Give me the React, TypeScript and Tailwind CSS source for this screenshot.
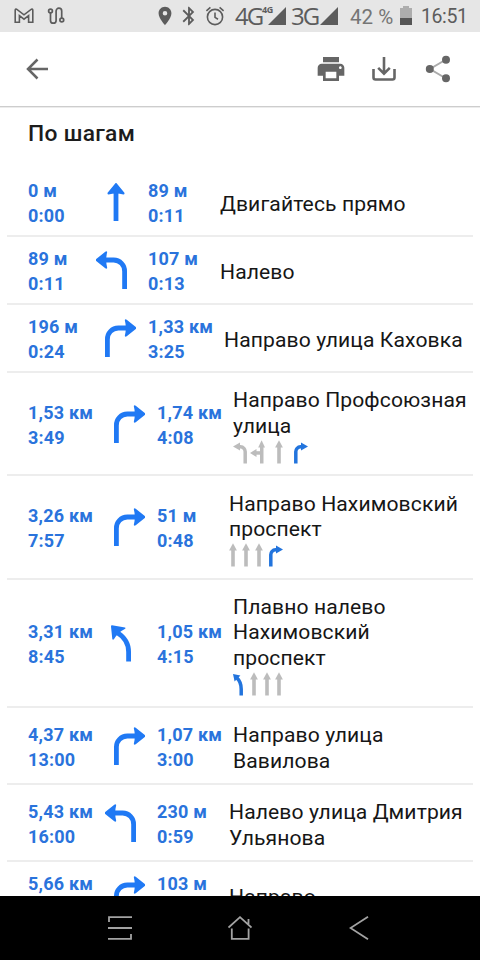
import type { ReactNode } from "react";
import { MdBluetooth, MdLocationOn, MdPrint } from "react-icons/md";

type Turn = "straight" | "left" | "right" | "slight";
type Lane = Turn | "leftStraight";

interface Step {
  from: [string, string];
  turn: Turn;
  leg: [string, string];
  text: ReactNode;
  height: string;
  // column widths grow with the "км" values
  fromCol: string;
  legCol: string;
  lanes?: { type: Lane; gap: string; active?: boolean }[];
}

const STEPS: Step[] = [
  {
    from: ["0 м", "0:00"],
    turn: "straight",
    leg: ["89 м", "0:11"],
    text: "Двигайтесь прямо",
    height: "h-[69px]",
    fromCol: "w-[68px]",
    legCol: "w-[72px]",
  },
  {
    from: ["89 м", "0:11"],
    turn: "left",
    leg: ["107 м", "0:13"],
    text: "Налево",
    height: "h-[68px]",
    fromCol: "w-[68px]",
    legCol: "w-[72px]",
  },
  {
    from: ["196 м", "0:24"],
    turn: "right",
    leg: ["1,33 км", "3:25"],
    text: "Направо улица Каховка",
    height: "h-[68px]",
    fromCol: "w-[68px]",
    legCol: "w-[76px]",
  },
  {
    from: ["1,53 км", "3:49"],
    turn: "right",
    leg: ["1,74 км", "4:08"],
    text: <>Направо Профсоюзная<br />улица</>,
    height: "h-[103px]",
    fromCol: "w-[77px]",
    legCol: "w-[76px]",
    lanes: [
      { type: "left", gap: "ml-0" },
      { type: "leftStraight", gap: "ml-[3px]" },
      { type: "straight", gap: "ml-[10px]" },
      { type: "right", gap: "ml-[11px]", active: true },
    ],
  },
  {
    from: ["3,26 км", "7:57"],
    turn: "right",
    leg: ["51 м", "0:48"],
    text: <>Направо Нахимовский<br />проспект</>,
    height: "h-[104px]",
    fromCol: "w-[77px]",
    legCol: "w-[72px]",
    lanes: [
      { type: "straight", gap: "ml-0" },
      { type: "straight", gap: "ml-[5px]" },
      { type: "straight", gap: "ml-[5px]" },
      { type: "right", gap: "ml-[6px]", active: true },
    ],
  },
  {
    from: ["3,31 км", "8:45"],
    turn: "slight",
    leg: ["1,05 км", "4:15"],
    text: <>Плавно налево<br />Нахимовский<br />проспект</>,
    height: "h-[128px]",
    fromCol: "w-[77px]",
    legCol: "w-[76px]",
    lanes: [
      { type: "slight", gap: "ml-0", active: true },
      { type: "straight", gap: "ml-[7px]" },
      { type: "straight", gap: "ml-[5px]" },
      { type: "straight", gap: "ml-[4px]" },
    ],
  },
  {
    from: ["4,37 км", "13:00"],
    turn: "right",
    leg: ["1,07 км", "3:00"],
    text: <>Направо улица<br />Вавилова</>,
    height: "h-[77px]",
    fromCol: "w-[77px]",
    legCol: "w-[76px]",
  },
  {
    from: ["5,43 км", "16:00"],
    turn: "left",
    leg: ["230 м", "0:59"],
    text: <>Налево улица Дмитрия<br />Ульянова</>,
    height: "h-[77px]",
    fromCol: "w-[77px]",
    legCol: "w-[72px]",
  },
  {
    from: ["5,66 км", "16:59"],
    turn: "right",
    leg: ["103 м", "0:22"],
    text: "Направо",
    height: "h-[68px]",
    fromCol: "w-[77px]",
    legCol: "w-[72px]",
  },
];

function RightArrow() {
  return (
    <>
      <path d="M11.4 38V20.5A11 11 0 0 1 22.4 9H32" fill="none" stroke="currentColor" strokeWidth="4.8" />
      <path d="M28.8 1Q29.4-.2 30.7.8L39.8 8Q40.6 9 39.8 10L30.7 17.2Q29.4 18.2 28.8 17Q30.8 9 28.8 1Z" />
    </>
  );
}

function TurnIcon({ turn }: { turn: Turn }) {
  return (
    <svg viewBox="0 0 40 40" className="block size-10 shrink-0 text-[#2079f4]" fill="currentColor">
      {turn === "straight" && (
        <>
          <path d="M17.6 8h4.8v30h-4.8z" />
          <path d="M19.2.4Q20 -.6 20.8.4L28.4 9.8Q28.9 11.4 27.4 11.4Q20 9.8 12.6 11.4Q11.1 11.4 11.6 9.8Z" />
        </>
      )}
      {turn === "right" && <RightArrow />}
      {turn === "left" && (
        <g transform="matrix(-1 0 0 1 40 0)">
          <RightArrow />
        </g>
      )}
      {turn === "slight" && (
        <>
          <path d="M23.6 37.5V28Q23.6 15.5 12 8.5" fill="none" stroke="currentColor" strokeWidth="4.8" />
          <path d="M6 2.4Q6 1.2 7 1.3L20 3.4Q21 3.8 20.2 4.8Q13 8.4 8.9 15.2Q7.8 16.2 7.3 15Z" />
        </>
      )}
    </svg>
  );
}

function LaneIcon({ type, gap, active }: { type: Lane; gap: string; active?: boolean }) {
  const color = active ? "text-[#2274dd]" : "text-[#bcbcbc]";
  if (type === "straight") {
    return (
      <svg viewBox="0 0 8 24" className={`block h-6 w-2 ${gap} ${color}`} fill="currentColor">
        <path d="M2.2 6h3.6v17.5H2.2z" />
        <path d="M4 .3 7.9 7.4H.1z" />
      </svg>
    );
  }
  if (type === "slight") {
    return (
      <svg viewBox="0 0 10 24" className={`block h-6 w-2.5 ${gap} ${color}`} fill="currentColor">
        <path d="M8.2 23.5V17Q8.2 10 4 6" fill="none" stroke="currentColor" strokeWidth="3.5" />
        <path d="M0 2 7.4 3.4 1.6 9.4z" />
      </svg>
    );
  }
  if (type === "leftStraight") {
    return (
      <svg viewBox="0 0 15 24" className={`block h-6 w-[15px] ${gap} ${color}`} fill="currentColor">
        <path d="M10 6h3.5v17.5H10z" />
        <path d="M11.6.3 15 7.4H8.2z" />
        <path d="M5 11.2h6v3.5H5z" />
        <path d="M0 13 6.5 9v8z" />
      </svg>
    );
  }
  return (
    <svg viewBox="0 0 14 24" className={`block h-6 w-3.5 ${gap} ${color}`} fill="currentColor">
      <g transform={type === "left" ? "matrix(-1 0 0 1 14 0)" : undefined}>
        <path d="M1.8 23.5V12A5 5 0 0 1 6.6 6.7H9" fill="none" stroke="currentColor" strokeWidth="3.5" />
        <path d="M7 2.6 14 6.6l-7 4z" />
      </g>
    </svg>
  );
}

function StepRow({ step }: { step: Step }) {
  return (
    <li className={`mx-[7px] flex shrink-0 items-center border-b-2 border-[#ededed] pl-[21px] pt-0.5 ${step.height}`}>
      <Stat lines={step.from} width={step.fromCol} />
      <TurnIcon turn={step.turn} />
      <div className="w-3 shrink-0" />
      <Stat lines={step.leg} width={step.legCol} />
      <div className="whitespace-nowrap pt-0.5 text-[21.1px] leading-[25.4px] tracking-[0.1px] text-[#161616]">
        {step.text}
        {step.lanes && (
          <div className="mt-0.5 flex h-6">
            {step.lanes.map((lane, i) => (
              <LaneIcon key={i} {...lane} />
            ))}
          </div>
        )}
      </div>
    </li>
  );
}

function Stat({ lines, width }: { lines: [string, string]; width: string }) {
  return (
    <div className={`shrink-0 whitespace-nowrap text-[18px] font-bold leading-[25px] tracking-[0.2px] text-[#2a73dc] ${width}`}>
      <div>{lines[0]}</div>
      <div>{lines[1]}</div>
    </div>
  );
}

function StatusBar() {
  return (
    <div className="flex h-8 shrink-0 items-center bg-[#e6e6e6] text-[#5c5c5c]">
      <svg viewBox="0 0 20 16" className="ml-[14px] h-4 w-5" fill="none" stroke="currentColor" strokeWidth="1.6">
        <path d="M1.2 14.2V2.2Q1.2.8 2.6 1.2L10 6.8 17.4 1.2Q18.8.8 18.8 2.2V14.2H14.6V7.6L10 11.2 5.4 7.6V14.2Z" />
      </svg>
      <svg viewBox="0 0 18 18" className="ml-[13px] size-[18px]" fill="none" stroke="currentColor" strokeWidth="1.7">
        <circle cx="3.5" cy="4" r="1.9" />
        <circle cx="14.8" cy="13" r="1.9" />
        <path d="M3.5 6v7.4a2.8 2.8 0 0 0 5.6 0V4a2.8 2.8 0 0 1 5.6 0v7" />
      </svg>
      <MdLocationOn className="ml-[89px] size-[22px]" />
      <MdBluetooth className="ml-[2px] size-[22px]" />
      <svg viewBox="0 0 20 20" className="ml-[5px] size-5" fill="none" stroke="currentColor" strokeWidth="1.6">
        <circle cx="10" cy="11" r="7.6" />
        <path d="M10 6.6v4.8l3 1.8M1.4 4.8 5.4 1.4M18.6 4.8 14.6 1.4" />
      </svg>
      <span className="ml-[10px] w-[27px] whitespace-nowrap font-['Open_Sans'] text-[24px] leading-8 tracking-[-2px]">4G</span>
      <span className="-mt-3 w-3 whitespace-nowrap font-['Open_Sans'] text-[9px] font-bold leading-3 tracking-[-0.4px]">4G</span>
      <svg viewBox="0 0 18 18" className="-ml-[6px] size-[18px] shrink-0" fill="currentColor">
        <path d="M0 18 18 0v18z" />
      </svg>
      <span className="ml-[5px] w-[26px] whitespace-nowrap font-['Open_Sans'] text-[24px] leading-8 tracking-[-2px]">3G</span>
      <svg viewBox="0 0 18 18" className="ml-[3px] size-[18px] shrink-0" fill="currentColor">
        <path d="M0 18 18 0v18z" />
      </svg>
      <span className="ml-[12px] w-[46px] whitespace-nowrap pt-px text-[20.5px] leading-8 text-[#757575]">42 %</span>
      <svg viewBox="0 0 12 20" className="ml-[4px] h-5 w-3 shrink-0">
        <path d="M3 0h6v2h3v11H0V2h3z" fill="#adadad" />
        <path d="M0 12h12v7H0z" fill="#555" />
      </svg>
      <span className="ml-[9px] whitespace-nowrap pt-px text-[19.5px] leading-8 tracking-[-0.4px]">16:51</span>
    </div>
  );
}

function AppBar() {
  return (
    <header className="flex h-[75px] shrink-0 items-center border-b border-[#cdcdcd] text-[#666]">
      <svg viewBox="0 0 24 24" className="ml-[25px] size-6" fill="none" stroke="currentColor" strokeWidth="2.5">
        <path d="M23 12H3M12.5 2.5 3 12l9.5 9.5" />
      </svg>
      <MdPrint className="ml-[266px] size-8" />
      <svg viewBox="0 0 26 26" className="ml-[24px] size-[26px]" fill="none" stroke="currentColor" strokeWidth="2.6">
        <path d="M2.5 13v8.5q0 2 2 2h17q2 0 2-2V13M13 1v16M7.2 11.8 13 17.6l5.8-5.8" />
      </svg>
      <svg viewBox="0 0 26 28" className="ml-[28px] h-7 w-[26px]" fill="currentColor">
        <path d="M21 4.5 5 14l16 9.5" fill="none" stroke="#ababab" strokeWidth="2" />
        <circle cx="21" cy="4.8" r="4" />
        <circle cx="4.8" cy="14" r="4" />
        <circle cx="21" cy="23.2" r="4" />
      </svg>
    </header>
  );
}

function NavBar() {
  return (
    <nav className="flex h-16 shrink-0 items-center bg-black text-[#a3a3a3]">
      <svg viewBox="0 0 24 24" className="ml-[108px] size-6" fill="none" stroke="currentColor" strokeWidth="1.8">
        <path d="M1 6V1.2h23M0 12h24M0 22.8h23V18" />
      </svg>
      <svg viewBox="0 0 24 24" className="ml-[96px] size-6" fill="none" stroke="currentColor" strokeWidth="1.8">
        <path d="M.5 11.5 12 1.2l11.5 10.3M20.5 8V3M3.8 12.5v10.3h16.8V12.5" />
      </svg>
      <svg viewBox="0 0 20 24" className="ml-[97px] h-6 w-5" fill="none" stroke="currentColor" strokeWidth="1.8">
        <path d="M19 .8 1.5 12 19 23.2" />
      </svg>
    </nav>
  );
}

export default function App() {
  return (
    <div className="flex h-[960px] w-[480px] flex-col overflow-hidden bg-white font-[Roboto,sans-serif]">
      <StatusBar />
      <AppBar />
      <main className="flex min-h-0 flex-1 flex-col overflow-hidden border-t border-[#ececec]">
        <h1 className="h-[60px] shrink-0 pl-7 text-[22.8px] font-medium leading-[51px] tracking-[0.3px] text-[#1c1c1c]">
          По шагам
        </h1>
        <ul className="flex flex-col">
          {STEPS.map((step, i) => (
            <StepRow key={i} step={step} />
          ))}
        </ul>
      </main>
      <NavBar />
    </div>
  );
}
